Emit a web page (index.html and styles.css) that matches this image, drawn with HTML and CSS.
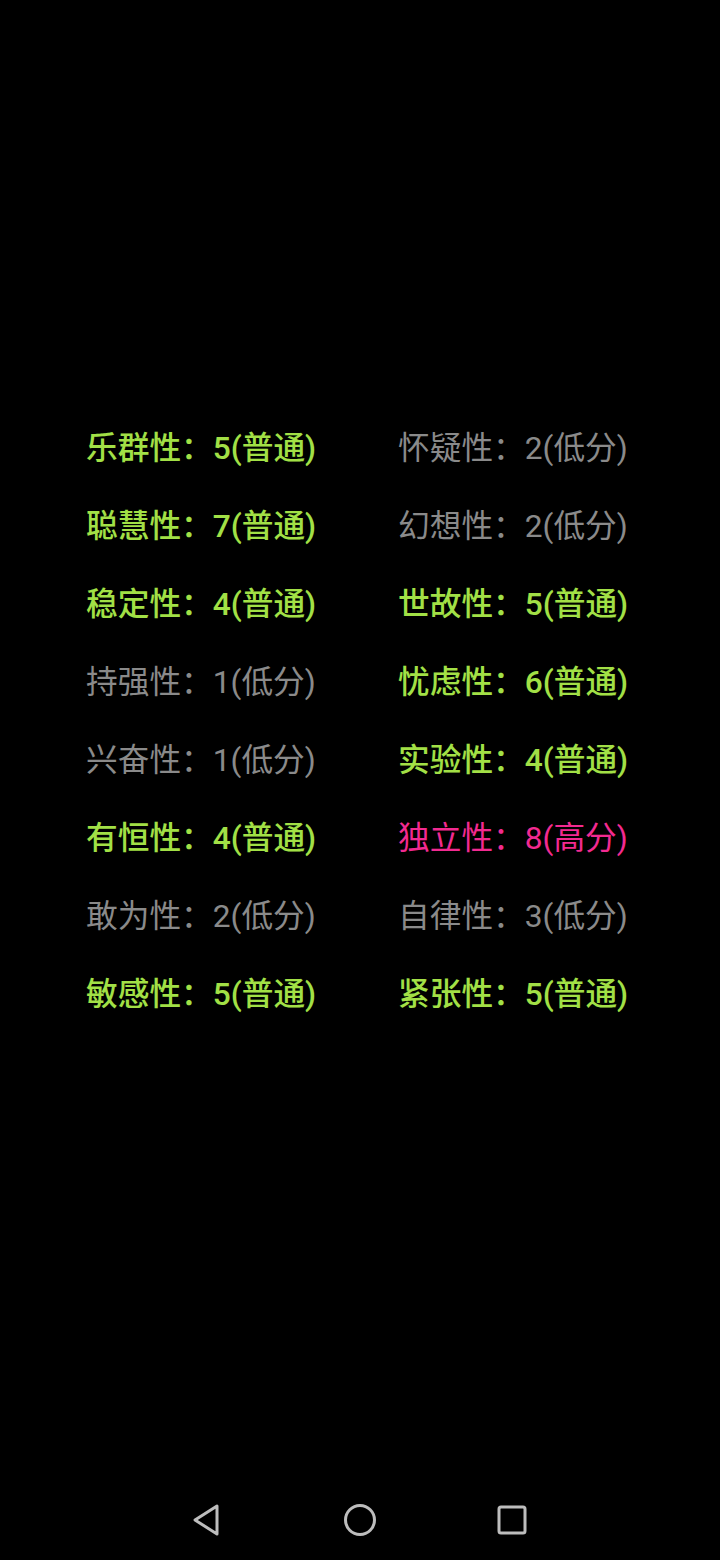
FILE: index.html
```html
<!DOCTYPE html>
<html lang="zh">
<head>
<meta charset="utf-8">
<link rel="stylesheet" href="styles.css">
</head>
<body>
<div class="screen">
  <div class="grid">
    <div class="item normal">乐群性：5(普通)</div>
    <div class="item low">怀疑性：2(低分)</div>
    <div class="item normal">聪慧性：7(普通)</div>
    <div class="item low">幻想性：2(低分)</div>
    <div class="item normal">稳定性：4(普通)</div>
    <div class="item normal">世故性：5(普通)</div>
    <div class="item low">持强性：1(低分)</div>
    <div class="item normal">忧虑性：6(普通)</div>
    <div class="item low">兴奋性：1(低分)</div>
    <div class="item normal">实验性：4(普通)</div>
    <div class="item normal">有恒性：4(普通)</div>
    <div class="item high">独立性：8(高分)</div>
    <div class="item low">敢为性：2(低分)</div>
    <div class="item low">自律性：3(低分)</div>
    <div class="item normal">敏感性：5(普通)</div>
    <div class="item normal">紧张性：5(普通)</div>
  </div>
  <div class="navbar">
    <svg class="nav-icon" width="40" height="40" viewBox="0 0 40 40"><path d="M29 6 L29 34 L7 20 Z" fill="none" stroke="#bdbdbd" stroke-width="3" stroke-linejoin="round"/></svg>
    <svg class="nav-icon" width="40" height="40" viewBox="0 0 40 40"><circle cx="20" cy="20" r="14.5" fill="none" stroke="#bdbdbd" stroke-width="3"/></svg>
    <svg class="nav-icon" width="40" height="40" viewBox="0 0 40 40"><rect x="7" y="7" width="26" height="26" rx="2" fill="none" stroke="#bdbdbd" stroke-width="3"/></svg>
  </div>
</div>
</body>
</html>
```

FILE: styles.css
```css
html, body {
  margin: 0;
  padding: 0;
  background: #000;
}
.screen {
  width: 720px;
  height: 1560px;
  display: flex;
  flex-direction: column;
  font-family: Roboto, "Noto Sans CJK SC", sans-serif;
}
.grid {
  margin-top: 410px;
  margin-left: 86px;
  display: grid;
  grid-template-columns: 312px 312px;
}
.item {
  font-size: 31.7px;
  line-height: 78px;
  height: 78px;
  white-space: nowrap;
}
.normal {
  color: #a2e046;
  font-weight: 500;
}
.low {
  color: #8a8a8a;
}
.high {
  color: #f22a90;
}
.navbar {
  margin-top: auto;
  height: 80px;
  display: flex;
  justify-content: center;
  align-items: center;
  gap: 112px;
}
.nav-icon {
  display: block;
}
```
